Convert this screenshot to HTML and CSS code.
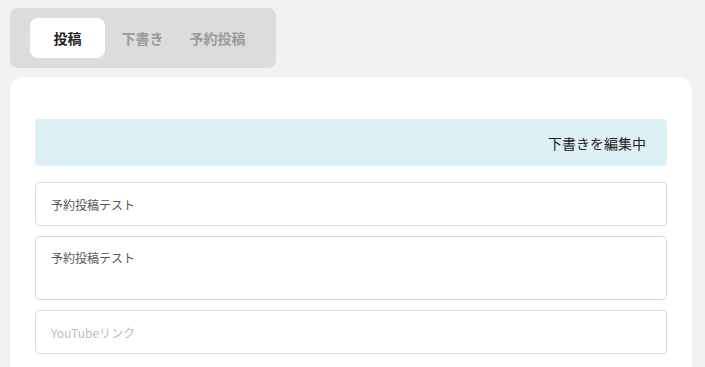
FILE: index.html
```html
<!DOCTYPE html>
<html lang="ja">
<head>
<meta charset="utf-8">
<link rel="stylesheet" href="styles.css">
</head>
<body>
<div class="page">
  <nav class="tabs">
    <button class="tab active">投稿</button>
    <button class="tab">下書き</button>
    <button class="tab">予約投稿</button>
  </nav>
  <section class="card">
    <div class="banner">下書きを編集中</div>
    <input class="field" type="text" value="予約投稿テスト">
    <textarea class="field area">予約投稿テスト</textarea>
    <input class="field" type="text" placeholder="YouTubeリンク">
  </section>
</div>
</body>
</html>
```
FILE: styles.css
```css
* { box-sizing: border-box; }
html, body { margin: 0; padding: 0; }
body {
  background: #f1f2f4;
  font-family: "Noto Sans CJK JP", "Noto Sans", sans-serif;
  color: #333;
}
.page {
  padding: 8px 13px 0 10px;
  display: flex;
  flex-direction: column;
  align-items: flex-start;
  gap: 9px;
}
.tabs {
  display: flex;
  background: #dcdcdc;
  border-radius: 8px;
  padding: 10px 21px 10px 20px;
}
.tab {
  width: 75px;
  height: 40px;
  border: none;
  background: transparent;
  border-radius: 8px;
  font-family: inherit;
  font-size: 14px;
  font-weight: 700;
  color: #9a9a9a;
  padding: 0;
  cursor: pointer;
}
.tab.active {
  background: #fff;
  color: #222;
}
.card {
  align-self: stretch;
  background: #fff;
  border-radius: 14px 14px 0 0;
  padding: 42px 25px 20px 25px;
  display: flex;
  flex-direction: column;
  gap: 10px;
  min-height: 300px;
}
.banner {
  background: #ddf0f4;
  border-radius: 4px;
  height: 47px;
  display: flex;
  align-items: center;
  justify-content: flex-end;
  padding-right: 21px;
  font-size: 14px;
  color: #222;
  margin-bottom: 6px;
}
.field {
  display: block;
  width: 100%;
  height: 44px;
  border: 1px solid #dadada;
  border-radius: 4px;
  padding: 0 15px;
  font-family: inherit;
  font-size: 12px;
  color: #555;
  background: #fff;
  outline: none;
}
.field::placeholder { color: #bdbdbd; }
.area {
  height: 64px;
  padding: 12px 15px;
  resize: none;
  line-height: 18px;
}
```
